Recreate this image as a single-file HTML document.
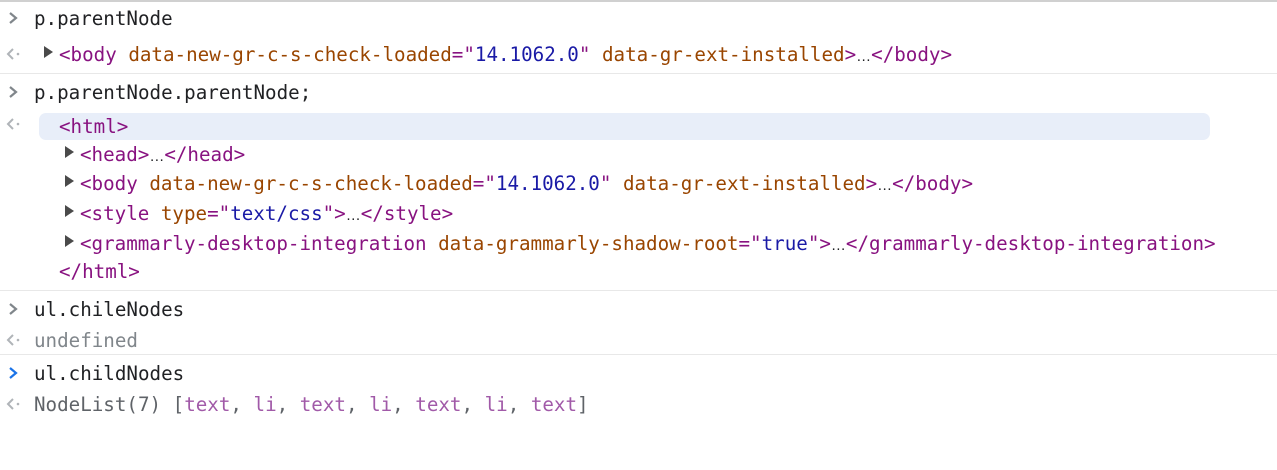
<!DOCTYPE html>
<html><head><meta charset="utf-8"><style>
html,body{margin:0;padding:0;background:#fff;width:1277px;height:470px;overflow:hidden;position:relative}
body{font-family:"DejaVu Sans Mono",monospace;font-size:19.2px;color:#202124}
.top{position:absolute;left:0;top:0;width:1277px;height:2px;background:#d0d0d0}
.div{position:absolute;left:0;width:1277px;height:1px;background:#e8e8e8}
.l{position:absolute;white-space:pre;line-height:24px;height:24px}
.t{color:#881280}.a{color:#994500}.v{color:#1a1aa6}.g{color:#80868b}.p{color:#a15aa8}.n{color:#5f6368}
.hl{position:absolute;left:39px;top:113px;width:1171px;height:27px;background:#e8eef9;border-radius:7px}
.ic{position:absolute}
.tri{position:absolute;width:0;height:0;border-top:6px solid transparent;border-bottom:6px solid transparent;border-left:9px solid #4a4a4a}
.el{font-family:"Liberation Sans",sans-serif;font-size:15px}
</style></head><body>
<div class="top"></div>
<div class="div" style="top:73px"></div>
<div class="div" style="top:290px"></div>
<div class="div" style="top:354px"></div>
<div class="hl"></div>

<svg class="ic" style="left:6px;top:11px" width="14" height="14"><path d="M4 2 L10 7 L4 12" fill="none" stroke="#80868b" stroke-width="2.2"/></svg>
<svg class="ic" style="left:6px;top:85px" width="14" height="14"><path d="M4 2 L10 7 L4 12" fill="none" stroke="#80868b" stroke-width="2.2"/></svg>
<svg class="ic" style="left:6px;top:302px" width="14" height="14"><path d="M4 2 L10 7 L4 12" fill="none" stroke="#80868b" stroke-width="2.2"/></svg>
<svg class="ic" style="left:6px;top:366px" width="14" height="14"><path d="M4 2 L10 7 L4 12" fill="none" stroke="#1a73e8" stroke-width="2.2"/></svg>

<svg class="ic" style="left:5px;top:47px" width="16" height="14"><path d="M8 2 L3 7 L8 12" fill="none" stroke="#b0b4b8" stroke-width="2"/><circle cx="13" cy="7" r="1.3" fill="#b0b4b8"/></svg>
<svg class="ic" style="left:5px;top:117px" width="16" height="14"><path d="M8 2 L3 7 L8 12" fill="none" stroke="#b0b4b8" stroke-width="2"/><circle cx="13" cy="7" r="1.3" fill="#b0b4b8"/></svg>
<svg class="ic" style="left:5px;top:333px" width="16" height="14"><path d="M8 2 L3 7 L8 12" fill="none" stroke="#b0b4b8" stroke-width="2"/><circle cx="13" cy="7" r="1.3" fill="#b0b4b8"/></svg>
<svg class="ic" style="left:5px;top:397px" width="16" height="14"><path d="M8 2 L3 7 L8 12" fill="none" stroke="#b0b4b8" stroke-width="2"/><circle cx="13" cy="7" r="1.3" fill="#b0b4b8"/></svg>

<div class="l" style="left:34px;top:7px">p.parentNode</div>
<div class="tri" style="left:44px;top:46px"></div>
<div class="l" style="left:59px;top:43px"><span class="t">&lt;body</span> <span class="a">data-new-gr-c-s-check-loaded</span><span class="t">="</span><span class="v">14.1062.0</span><span class="t">"</span> <span class="a">data-gr-ext-installed</span><span class="t">&gt;</span><span class="el">…</span><span class="t">&lt;/body&gt;</span></div>

<div class="l" style="left:34px;top:81px">p.parentNode.parentNode;</div>
<div class="l t" style="left:59px;top:115px">&lt;html&gt;</div>
<div class="tri" style="left:65px;top:146px"></div>
<div class="l" style="left:80px;top:143px"><span class="t">&lt;head&gt;</span><span class="el">…</span><span class="t">&lt;/head&gt;</span></div>
<div class="tri" style="left:65px;top:175px"></div>
<div class="l" style="left:80px;top:172px"><span class="t">&lt;body</span> <span class="a">data-new-gr-c-s-check-loaded</span><span class="t">="</span><span class="v">14.1062.0</span><span class="t">"</span> <span class="a">data-gr-ext-installed</span><span class="t">&gt;</span><span class="el">…</span><span class="t">&lt;/body&gt;</span></div>
<div class="tri" style="left:65px;top:205px"></div>
<div class="l" style="left:80px;top:202px"><span class="t">&lt;style</span> <span class="a">type</span><span class="t">="</span><span class="v">text/css</span><span class="t">"&gt;</span><span class="el">…</span><span class="t">&lt;/style&gt;</span></div>
<div class="tri" style="left:65px;top:235px"></div>
<div class="l" style="left:80px;top:232px"><span class="t">&lt;grammarly-desktop-integration</span> <span class="a">data-grammarly-shadow-root</span><span class="t">="</span><span class="v">true</span><span class="t">"&gt;</span><span class="el">…</span><span class="t">&lt;/grammarly-desktop-integration&gt;</span></div>
<div class="l t" style="left:59px;top:260px">&lt;/html&gt;</div>

<div class="l" style="left:34px;top:298px">ul.chileNodes</div>
<div class="l g" style="left:34px;top:329px">undefined</div>
<div class="l" style="left:34px;top:362px">ul.childNodes</div>
<div class="l n" style="left:34px;top:393px">NodeList(7) [<span class="p">text</span>, <span class="p">li</span>, <span class="p">text</span>, <span class="p">li</span>, <span class="p">text</span>, <span class="p">li</span>, <span class="p">text</span>]</div>
</body></html>
